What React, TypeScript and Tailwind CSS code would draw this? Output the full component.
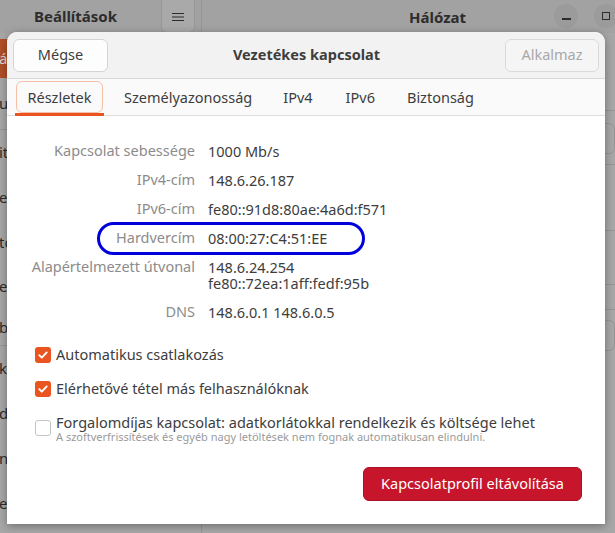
import React from "react";

const font = { fontFamily: '"Noto Sans", "Open Sans", sans-serif' };

function Check({ checked }: { checked: boolean }) {
  if (checked) {
    return (
      <div className="w-4 h-4 rounded-[3px] bg-[#e95420] flex items-center justify-center shrink-0">
        <svg width="12" height="12" viewBox="0 0 12 12">
          <path d="M2.3 6.2 L4.8 8.7 L9.7 3.4" fill="none" stroke="white" strokeWidth="1.9" strokeLinecap="round" strokeLinejoin="round" />
        </svg>
      </div>
    );
  }
  return <div className="w-4 h-4 rounded-[3px] bg-white border border-[#c4c4c4] shrink-0" />;
}

export default function App() {
  const sidebar = [
    { t: "ál", h: 39, sel: true },
    { t: "u", h: 52, sep: true },
    { t: "it", h: 45 },
    { t: "e", h: 45 },
    { t: "tc", h: 44 },
    { t: "er", h: 45 },
    { t: "b", h: 37, sep: true },
    { t: "k", h: 45 },
    { t: "da", h: 45 },
    { t: "nl", h: 45 },
    { t: "e", h: 45 },
  ];
  const rows: [string, string[]][] = [
    ["Kapcsolat sebessége", ["1000 Mb/s"]],
    ["IPv4-cím", ["148.6.26.187"]],
    ["IPv6-cím", ["fe80::91d8:80ae:4a6d:f571"]],
    ["Hardvercím", ["08:00:27:C4:51:EE"]],
    ["Alapértelmezett útvonal", ["148.6.24.254", "fe80::72ea:1aff:fedf:95b"]],
    ["DNS", ["148.6.0.1 148.6.0.5"]],
  ];
  return (
    <div className="relative w-[615px] h-[533px] overflow-hidden bg-[#a7a7a7] text-[#2b2b2b]" style={font}>
      {/* background settings window */}
      <div className="flex h-full">
        <div className="w-[202px] flex flex-col border-r border-[#959595]">
          <div className="h-[33px] bg-[#a2a2a2] flex items-center relative shrink-0">
            <div className="ml-[34px] font-bold text-[15px] text-[#2d2d2d]">Beállítások</div>
            <div className="absolute left-[161px] top-[-6px] w-[34px] h-[39px] rounded-[6px] bg-[#a9a9a9] border border-[#979797] flex items-center justify-center pt-[6px]">
              <svg width="12" height="10" viewBox="0 0 12 10">
                <path d="M0 1.5H12M0 5H12M0 8.5H12" stroke="#2d2d2d" strokeWidth="1.2" />
              </svg>
            </div>
          </div>
          <div className="flex flex-col pt-[6px]">
            {sidebar.map((s, i) => (
              <div
                key={i}
                className={
                  "flex items-center text-[15px] whitespace-nowrap " +
                  (s.sel ? "bg-[#b14f27] text-[#d9d9d9]" : "") +
                  (s.sep ? " border-b border-[#959595]" : "")
                }
                style={{ height: s.h }}
              >
                <span className="ml-[-1px]">{s.t}</span>
              </div>
            ))}
          </div>
        </div>
        <div className="flex-1 flex flex-col">
          <div className="h-[33px] bg-[#a2a2a2] flex items-center relative shrink-0">
            <div className="absolute left-[207px] top-[6px] font-bold text-[15px] text-[#2d2d2d]">Hálózat</div>
            <div className="absolute left-[352px] top-[4px] w-6 h-6 rounded-full bg-[#9b9b9b] flex items-center justify-center">
              <div className="w-[9px] h-[1.5px] bg-[#2d2d2d] mt-[6px]" />
            </div>
            <div className="absolute left-[392px] top-[4px] w-6 h-6 rounded-full bg-[#9b9b9b] flex items-center justify-center">
              <div className="w-[8px] h-[8px] border border-[#2d2d2d]" />
            </div>
          </div>
          <div className="flex flex-col items-end pr-0 pt-[77px]">
            <div className="w-full border-t border-[#959595]" />
            <div className="w-full h-[31px] mt-[12px] border border-[#959595] rounded-[6px] ml-[380px]" />
            <div className="w-full border-t border-[#959595] mt-[10px]" />
            <div className="w-full border-t border-[#959595] mt-[65px]" />
            <div className="w-full border-t border-[#959595] mt-[53px]" />
            <div className="w-full border-t border-[#959595] mt-[24px]" />
            <div className="w-full h-[31px] mt-[10px] border border-[#959595] rounded-[6px]" />
          </div>
        </div>
      </div>

      {/* dialog */}
      <div className="absolute left-[7px] top-[32px] w-[598px] h-[492px] bg-white rounded-t-[10px] shadow-[0_2px_8px_rgba(0,0,0,0.35)] flex flex-col overflow-hidden">
        <div className="h-[47px] bg-[#f2f2f2] border-b border-[#d8d8d8] flex items-center justify-between px-[6px] shrink-0 relative">
          <button className="w-[95px] h-[33px] rounded-[6px] bg-[#fdfdfd] border border-[#d4d4d4] text-[14.5px] text-[#3d3d3d]">Mégse</button>
          <div className="font-bold text-[14.5px] text-[#3d3d3d]">Vezetékes kapcsolat</div>
          <button className="w-[94px] h-[33px] rounded-[6px] bg-[#f5f5f5] border border-[#dadada] text-[14.5px] text-[#a8a8a8]">Alkalmaz</button>
        </div>
        <div className="h-[37px] bg-[#fafafa] border-b border-[#dedede] flex items-end px-[8px] shrink-0 text-[14.5px] text-[#3d3d3d]">
          <div className="relative w-[89px] h-[35px] flex items-center justify-center">
            <div className="absolute left-[1px] right-[1px] top-[1px] bottom-[2px] rounded-[6px] border border-[#f6bfa8]" />
            <span className="relative">Részletek</span>
            <div className="absolute left-0 right-0 bottom-[-1px] h-[3px] bg-[#e95420]" />
          </div>
          <div className="h-[35px] flex items-center ml-[20px]">Személyazonosság</div>
          <div className="h-[35px] flex items-center ml-[31px]">IPv4</div>
          <div className="h-[35px] flex items-center ml-[33px]">IPv6</div>
          <div className="h-[35px] flex items-center ml-[32px]">Biztonság</div>
        </div>

        <div className="flex-1 flex flex-col relative pt-[26px]">
          <div className="grid grid-cols-[188px_1fr] gap-x-[13px] gap-y-[12px] text-[14.5px] leading-[17px]">
            {rows.map(([l, v]) => (
              <React.Fragment key={l}>
                <div className="text-right text-[#8c8c8c] whitespace-nowrap">{l}</div>
                <div className="text-[#3d3d3d] whitespace-nowrap leading-[16px] pt-[1px]">
                  {v.map((x) => (
                    <div key={x}>{x}</div>
                  ))}
                </div>
              </React.Fragment>
            ))}
          </div>
          <div className="absolute left-[90px] top-[106px] w-[268px] h-[33px] rounded-full border-[3px] border-[#0000dd]" />

          <div className="flex flex-col pl-[28px] mt-[26px] text-[14.5px] text-[#3d3d3d]">
            <div className="flex items-center gap-[5px] h-[17px]">
              <Check checked />
              <span>Automatikus csatlakozás</span>
            </div>
            <div className="flex items-center gap-[5px] h-[17px] mt-[17px]">
              <Check checked />
              <span>Elérhetővé tétel más felhasználóknak</span>
            </div>
            <div className="flex items-start gap-[5px] mt-[17px]">
              <div className="mt-[6px]"><Check checked={false} /></div>
              <div className="flex flex-col">
                <span className="leading-[16px]">Forgalomdíjas kapcsolat: adatkorlátokkal rendelkezik és költsége lehet</span>
                <span className="text-[11px] leading-[14px] text-[#9a9a9a]">A szoftverfrissítések és egyéb nagy letöltések nem fognak automatikusan elindulni.</span>
              </div>
            </div>
          </div>

          <div className="flex justify-end pr-[23px] mt-[23px]">
            <button className="w-[219px] h-[34px] rounded-[6px] bg-[#c7162b] border border-[#a8122a] text-white text-[14.5px]">Kapcsolatprofil eltávolítása</button>
          </div>
        </div>
      </div>
    </div>
  );
}
